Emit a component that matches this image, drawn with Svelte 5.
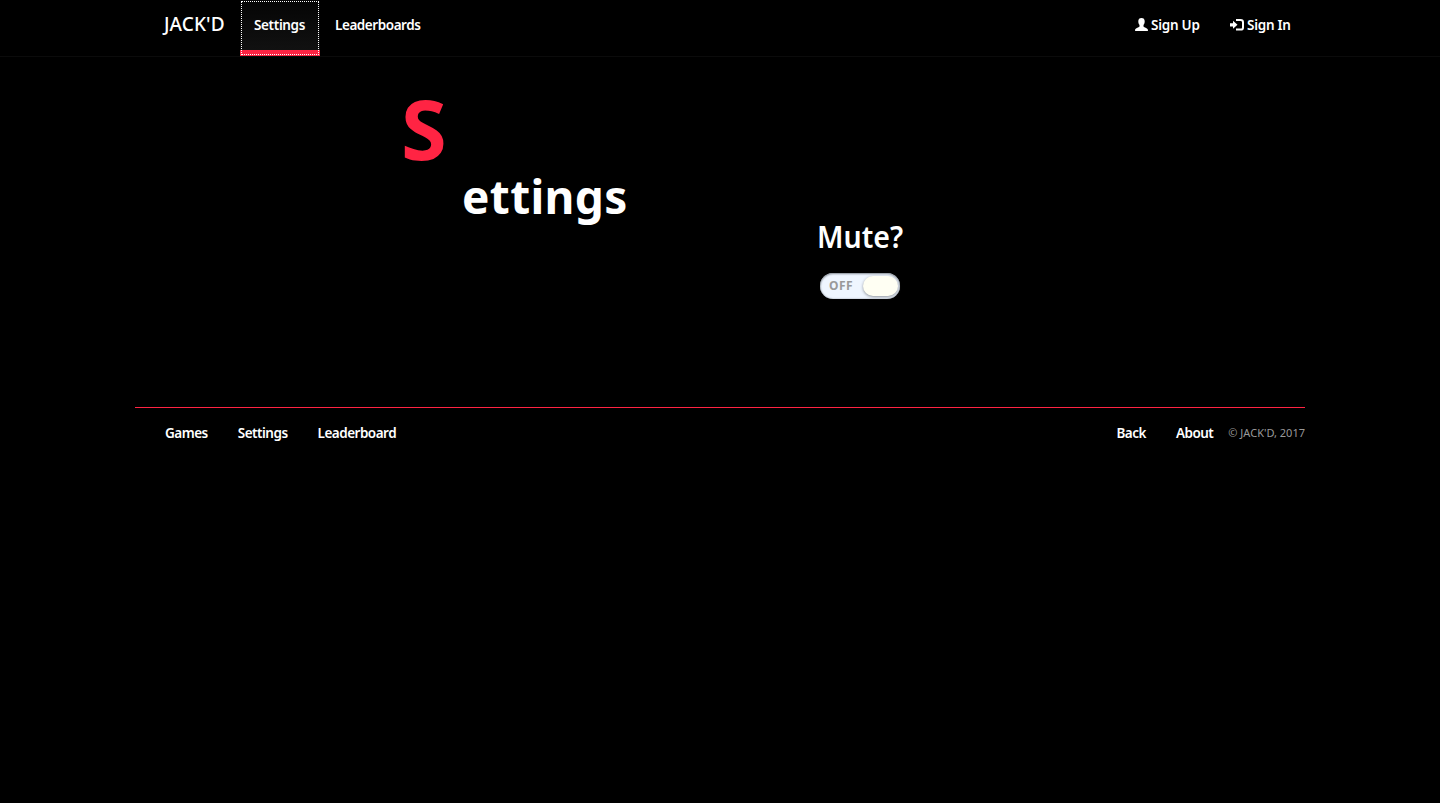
<script>
  const games = ['Games', 'Settings', 'Leaderboard'];
</script>

<header>
  <nav class="container">
    <a class="brand" href="#home"><span>JACK'D</span></a>
    <a class="link active" href="#settings"><span>Settings</span></a>
    <a class="link leaders" href="#leaderboards"><span>Leaderboards</span></a>
    <a class="link signup" href="#signup">
      <svg width="14" height="14" viewBox="0 0 14 14"><path d="M6.5 0C8.6 0 9.7 1.2 9.7 3.3C9.7 5.2 9.2 6.2 8.5 7.1V8.5C8.5 9.3 12.9 10 12.9 11.8V13H.1V11.8C.1 10 4.5 9.3 4.5 8.5V7.1C3.8 6.2 3.3 5.2 3.3 3.3C3.3 1.2 4.4 0 6.5 0Z"/></svg>
      <span>Sign Up</span>
    </a>
    <a class="link signin" href="#signin">
      <svg width="14" height="14" viewBox="0 0 14 14"><path d="M0 5.2H3V2.8L7.5 6.8L3 10.8V8.4H0Z"/><path d="M6 2H10.5Q13 2 13 4.2V9.4Q13 11.6 10.5 11.6H6" fill="none" stroke="#fff" stroke-width="2"/></svg>
      <span>Sign In</span>
    </a>
  </nav>
</header>

<main>
  <h1><span class="initial">S</span><span class="rest">ettings</span></h1>
  <section>
    <h2>Mute?</h2>
    <button class="switch" aria-label="Mute"><span>OFF</span><i></i></button>
  </section>
</main>

<footer>
  {#each games as label}
    <a href={'#' + label}><span>{label}</span></a>
  {/each}
  <a class="back" href="#back"><span>Back</span></a>
  <a href="#about"><span>About</span></a>
  <small><span>© JACK'D, 2017</span></small>
</footer>

<style>
  :global(body) { margin: 0; background: #000; color: #fff; font-family: "Noto Sans", sans-serif; }
  :global(html) { background: #000; }
  * { box-sizing: border-box; }
  a { color: #fff; text-decoration: none; }
  span { white-space: nowrap; }
  header { height: 57px; border-bottom: 1px solid #0b0b0b; }
  .container { width: 1170px; height: 56px; margin: 0 auto; padding: 0 15px; display: flex; }
  .brand { width: 90px; padding: 11px 0 0 14px; font-size: 19px; line-height: 26px; font-weight: 500; }
  .brand span { letter-spacing: 0.1px; }
  .link { display: flex; height: 56px; padding: 15px 0 0 15px; font-size: 13.5px; line-height: 20px; font-weight: 600; letter-spacing: -0.44px; }
  .active { position: relative; width: 80px; padding-left: 14px; letter-spacing: -0.35px; background: linear-gradient(#050505, #111); border-bottom: 6px solid #ff2443; }
  .active::after { content: ""; position: absolute; inset: 1px 1px -5px; border: 1px dotted #fff; }
  .signup { margin-left: auto; width: 95px; padding-left: 16px; letter-spacing: -0.25px; }
  .signin { width: 76px; padding-left: 16px; letter-spacing: -0.25px; }
  .link svg { flex: none; margin: 3px 2px 0 0; fill: #fff; }
  .signin svg { margin-right: 3px; }
  main { width: 1170px; height: 350px; margin: 0 auto; display: flex; }
  h1 { margin: 0; width: 590px; padding: 14px 0 0 266px; }
  h1 span { display: block; }
  .initial { font-size: 83px; line-height: 114px; color: #ff2443; }
  .rest { padding-left: 61px; font-size: 46px; line-height: 60px; letter-spacing: 0.35px; margin-top: -19px; }
  section { width: 270px; text-align: center; padding-top: 157px; }
  h2 { margin: 0; font-size: 31px; line-height: 44px; font-weight: 600; transform: scaleX(0.92); }
  .switch { display: flex; align-items: center; justify-content: space-between; width: 80px; height: 26px; margin: 15px auto 0; padding: 0 2px 1px 9px; border: 0; border-radius: 13px; background: #eff6ff; box-shadow: inset 0 1px 2px #8b929a, inset 0 0 2px #9aa2aa; color: #999; font: bold 12px "Noto Sans", sans-serif; letter-spacing: 0.4px; }
  .switch i { width: 35px; height: 20px; border-radius: 11px; background: #fffff3; box-shadow: 0 1px 3px #8d9299; }
  footer { width: 1170px; margin: 0 auto; padding: 15px 0 0 15px; border-top: 1px solid #ff2443; display: flex; font-size: 13.5px; line-height: 20px; font-weight: 600; letter-spacing: -0.5px; }
  footer a { padding: 0 15px; }
  .back { margin-left: auto; }
  footer small { font-size: 11px; font-weight: 400; color: #999; letter-spacing: 0; }
</style>
